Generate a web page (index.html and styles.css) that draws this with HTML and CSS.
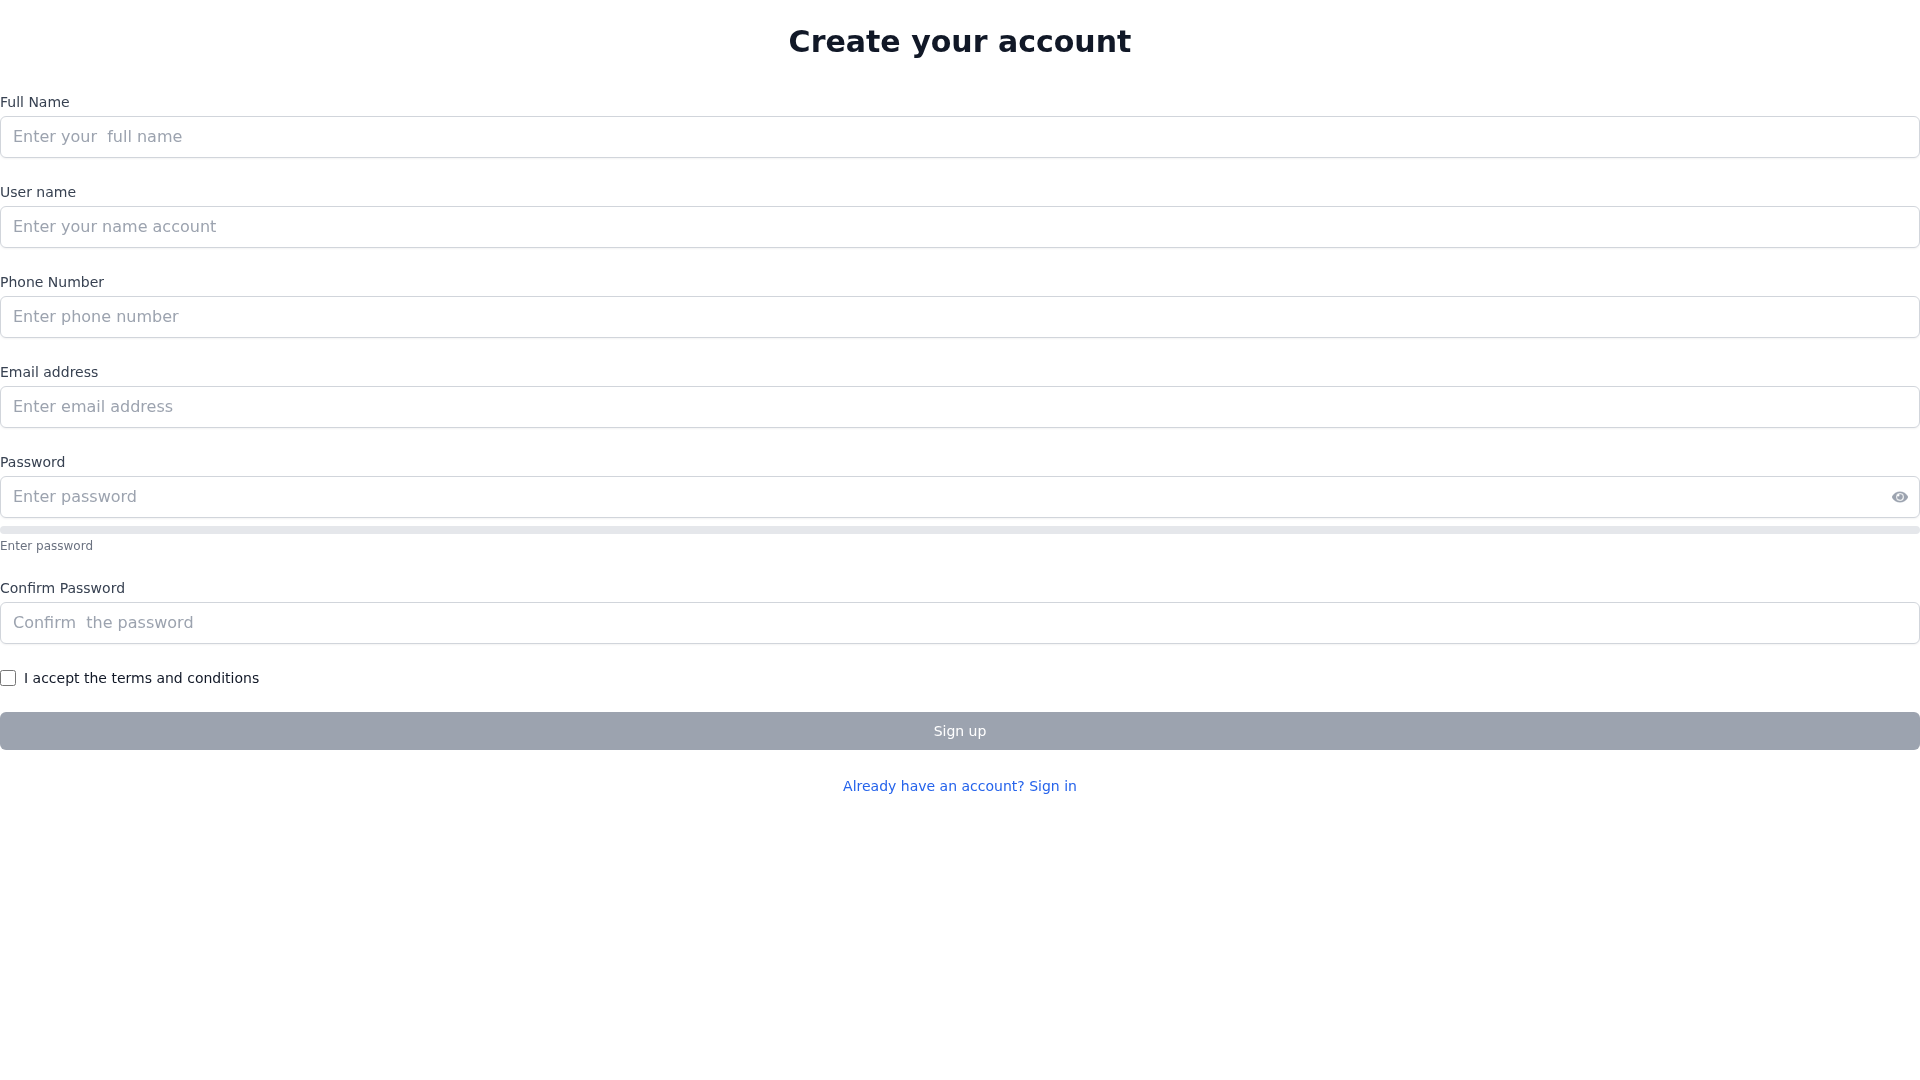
FILE: index.html
```html
<!DOCTYPE html>
<html lang="en">
<head>
<meta charset="utf-8">
<title>Create your account</title>
<link rel="stylesheet" href="styles.css">
</head>
<body>
<main class="page">
  <h1 class="title">Create your account</h1>
  <form class="form">
    <div class="field">
      <label class="label" for="fullname">Full Name</label>
      <input class="input" id="fullname" type="text" placeholder="Enter your  full name">
    </div>
    <div class="field">
      <label class="label" for="username">User name</label>
      <input class="input" id="username" type="text" placeholder="Enter your name account">
    </div>
    <div class="field">
      <label class="label" for="phone">Phone Number</label>
      <input class="input" id="phone" type="text" placeholder="Enter phone number">
    </div>
    <div class="field">
      <label class="label" for="email">Email address</label>
      <input class="input" id="email" type="text" placeholder="Enter email address">
    </div>
    <div class="field">
      <label class="label" for="password">Password</label>
      <div class="input-wrap">
        <input class="input input-pw" id="password" type="password" placeholder="Enter password">
        <span class="eye" aria-hidden="true">
          <svg viewBox="0 0 576 512" fill="currentColor" stroke="currentColor" stroke-width="12">
            <path d="M572.52 241.4C518.29 135.59 410.93 64 288 64S57.68 135.64 3.48 241.41a32.35 32.35 0 0 0 0 29.19C57.71 376.41 165.07 448 288 448s230.32-71.64 284.52-177.41a32.35 32.35 0 0 0 0-29.19zM288 400a144 144 0 1 1 144-144 143.93 143.93 0 0 1-144 144zm0-240a95.31 95.31 0 0 0-25.31 3.79 47.85 47.85 0 0 1-66.9 66.9A95.78 95.78 0 1 0 288 160z"/>
          </svg>
        </span>
      </div>
      <div class="meter"></div>
      <p class="hint">Enter password</p>
    </div>
    <div class="field">
      <label class="label" for="confirm">Confirm Password</label>
      <input class="input" id="confirm" type="password" placeholder="Confirm  the password">
    </div>
    <div class="terms">
      <input class="check" id="terms" type="checkbox">
      <label class="terms-label" for="terms">I accept the terms and conditions</label>
    </div>
    <button class="submit" type="button">Sign up</button>
    <a class="signin" href="#">Already have an account? Sign in</a>
  </form>
</main>
</body>
</html>
```

FILE: styles.css
```css
* {
  box-sizing: border-box;
}

html, body {
  margin: 0;
  padding: 0;
  background: #ffffff;
}

body {
  font-family: "DejaVu Sans", sans-serif;
  color: #111827;
}

.page {
  width: 100%;
  padding-top: 24px;
  will-change: transform;
}

.title {
  margin: 0 0 32px;
  font-size: 30px;
  line-height: 36px;
  font-weight: 700;
  text-align: center;
  color: #111827;
}

.form {
  display: flex;
  flex-direction: column;
  gap: 24px;
}

.field {
  display: flex;
  flex-direction: column;
}

.label {
  display: block;
  margin-bottom: 4px;
  font-size: 14px;
  line-height: 20px;
  font-weight: 400;
  color: #374151;
}

.input {
  display: block;
  width: 100%;
  height: 42px;
  padding: 7px 12px 9px 12px;
  border: 1px solid #d1d5db;
  border-radius: 6px;
  box-shadow: 0 1px 2px rgba(0, 0, 0, 0.05);
  background: #ffffff;
  font-family: inherit;
  font-size: 16px;
  line-height: 24px;
  color: #111827;
  outline: none;
}

.input::placeholder {
  color: #9ca3af;
  opacity: 1;
}

.input-wrap {
  position: relative;
}

.input-pw {
  padding-right: 40px;
}

.eye {
  position: absolute;
  top: 0;
  right: 12px;
  bottom: 0;
  display: flex;
  align-items: center;
  color: #9ca3af;
}

.eye svg {
  display: block;
  width: 16px;
  height: 16px;
}

.meter {
  height: 8px;
  margin-top: 8px;
  border-radius: 9999px;
  background: #e5e7eb;
}

.hint {
  margin: 4px 0 0;
  font-size: 12px;
  line-height: 16px;
  color: #6b7280;
}

.terms {
  display: flex;
  align-items: center;
  gap: 8px;
  height: 20px;
}

.check {
  width: 16px;
  height: 16px;
  margin: 0;
}

.terms-label {
  font-size: 14px;
  line-height: 20px;
  color: #111827;
}

.submit {
  display: block;
  width: 100%;
  height: 38px;
  padding: 8px 16px;
  border: 1px solid transparent;
  border-radius: 6px;
  background: #9ca3af;
  color: #ffffff;
  font-family: inherit;
  font-size: 14px;
  line-height: 20px;
  font-weight: 500;
  text-align: center;
}

.signin {
  display: block;
  margin-top: 2px;
  font-size: 14px;
  line-height: 20px;
  text-align: center;
  color: #2563eb;
  text-decoration: none;
}
```
